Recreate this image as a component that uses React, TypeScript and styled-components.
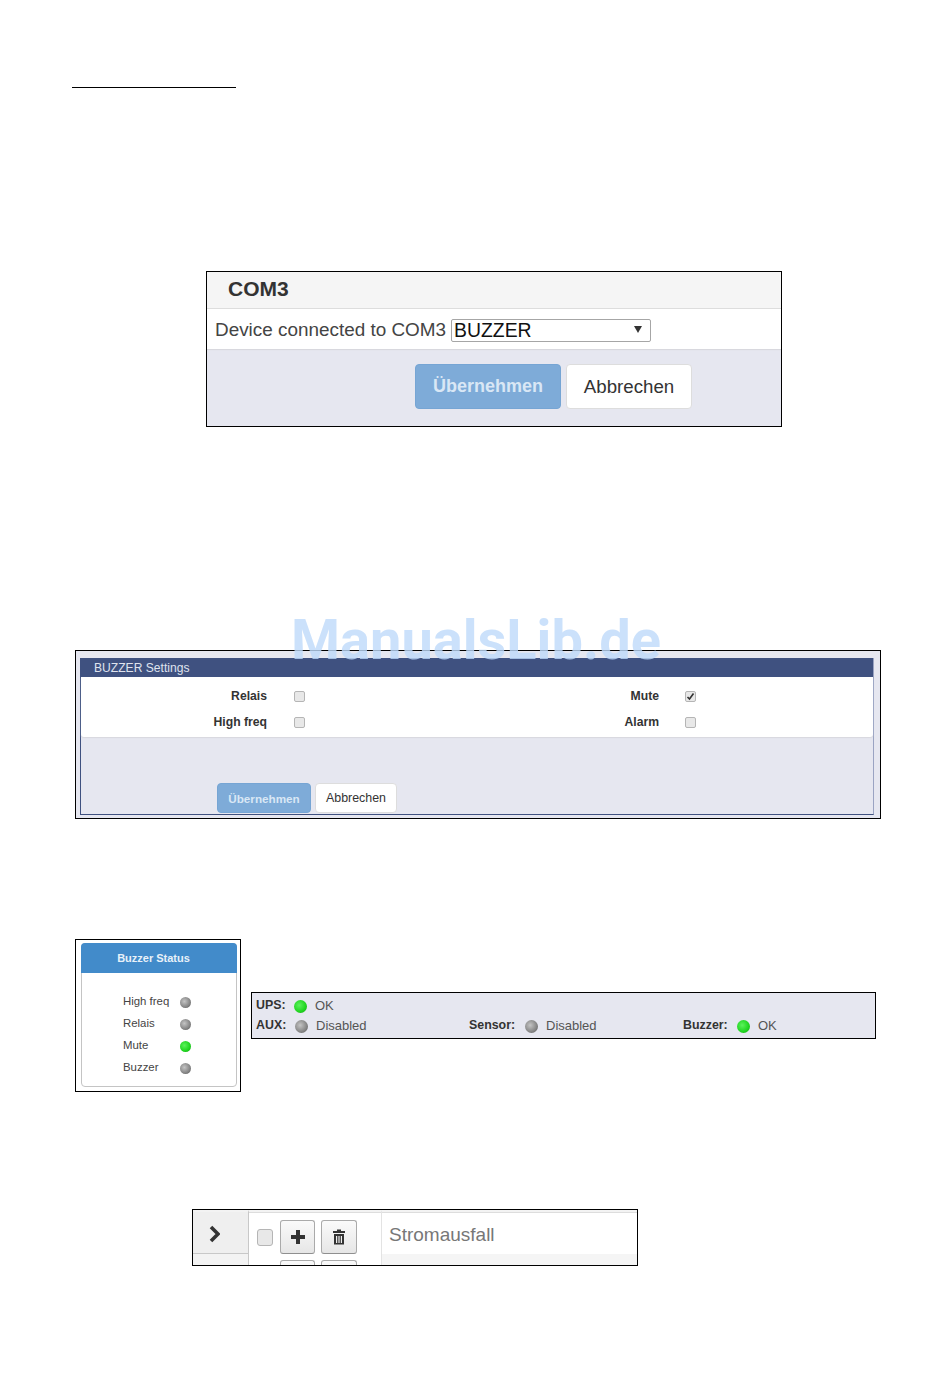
import React from "react";
import styled, { createGlobalStyle } from "styled-components";

const Global = createGlobalStyle`
  html, body { margin: 0; padding: 0; background: #fff; }
  body { font-family: "Liberation Sans", Arial, sans-serif; color: #333; }
`;

const Page = styled.div`
  position: relative;
  width: 950px;
  height: 1387px;
  overflow: hidden;
  padding-top: 87px;
  box-sizing: border-box;
`;

const Rule = styled.div`
  width: 164px;
  height: 1px;
  margin-left: 72px;
  background: #000;
`;

const Shot = styled.div<{ $w: number; $h: number }>`
  box-sizing: border-box;
  width: ${(p) => p.$w}px;
  height: ${(p) => p.$h}px;
  border: 1px solid #000;
  overflow: hidden;
  flex: none;
`;

const ComShot = styled(Shot)`
  margin: 183px 0 0 206px;
  display: flex;
  flex-direction: column;
  background: #e6e7f0;
`;

const ComHeader = styled.div`
  height: 36px;
  flex: none;
  padding-left: 21px;
  background: #f5f5f5;
  border-bottom: 1px solid #ddd;
  font-size: 21px;
  font-weight: 700;
  line-height: 34px;
  color: #333;
`;

const ComBody = styled.div`
  box-sizing: border-box;
  height: 40px;
  flex: none;
  padding: 2px 0 0 8px;
  display: flex;
  align-items: center;
  gap: 5px;
  background: #fff;
  box-shadow: 0 1px 1px #d8d8de;
  font-size: 18.9px;
  color: #444;
`;

const Select = styled.div`
  box-sizing: border-box;
  width: 200px;
  height: 23px;
  margin-top: 1px;
  padding-left: 2px;
  display: flex;
  align-items: center;
  justify-content: space-between;
  border: 1px solid #a6a6a6;
  border-radius: 2px;
  font-size: 19.4px;
  color: #111;
`;

const Arrow = styled.span`
  width: 0;
  height: 0;
  margin: 0 8px 3px 0;
  border-left: 4px solid transparent;
  border-right: 4px solid transparent;
  border-top: 7px solid #333;
`;

const ComActions = styled.div`
  display: flex;
  gap: 5px;
  margin: 15px 0 0 208px;
`;

const Button = styled.div<{ $primary?: boolean; $w: number; $h: number; $size: number }>`
  box-sizing: border-box;
  width: ${(p) => p.$w}px;
  height: ${(p) => p.$h}px;
  display: flex;
  align-items: center;
  justify-content: center;
  border-radius: 4px;
  font-size: ${(p) => p.$size}px;
  background: ${(p) => (p.$primary ? "#7eabd8" : "#fff")};
  color: ${(p) => (p.$primary ? "#d9e7f5" : "#333")};
  border: 1px solid ${(p) => (p.$primary ? "#76a5d4" : "#ddd")};
  font-weight: ${(p) => (p.$primary ? 700 : 400)};
`;

const BuzzerShot = styled(Shot)`
  margin: 223px 0 0 75px;
  padding: 7px 6px 3px 4px;
  background: #e6e7f0;
`;

const BuzzerFrame = styled.div`
  height: 156px;
  border-right: 1px solid #9aa3c2;
  border-left: 1px solid #3f5180;
  border-bottom: 1px solid #3f5180;
  display: flex;
  flex-direction: column;
`;

const BuzzerTitle = styled.div`
  height: 19px;
  flex: none;
  margin-left: -1px;
  margin-right: 0;
  padding-left: 14px;
  background: #3f5180;
  color: #dfe3ee;
  font-size: 12.1px;
  line-height: 20px;
`;

const BuzzerForm = styled.div`
  height: 60px;
  flex: none;
  display: grid;
  grid-template-columns: 186px 38px 354px 37px;
  grid-auto-rows: 26px;
  align-items: center;
  padding-top: 6px;
  box-sizing: border-box;
  background: #fff;
  border-radius: 0 0 3px 3px;
  box-shadow: 0 1px 1px #d8d8de;
`;

const FieldLabel = styled.span`
  text-align: right;
  font-size: 12.2px;
  font-weight: 700;
  color: #333;
`;

const Check = styled.span`
  box-sizing: border-box;
  justify-self: end;
  width: 11px;
  height: 11px;
  display: flex;
  align-items: center;
  justify-content: center;
  border: 1px solid #b5b5b5;
  border-radius: 2px;
  background: #e8e8e8;
`;

const BuzzerActions = styled.div`
  display: flex;
  gap: 4px;
  margin: 46px 0 0 136px;
`;

const StatusRow = styled.div`
  display: flex;
  align-items: flex-start;
  margin: 120px 0 0 75px;
`;

const StatusShot = styled(Shot)`
  padding: 3px 3px 4px 5px;
`;

const StatusPanel = styled.div`
  box-sizing: border-box;
  height: 144px;
  border: 1px solid #c4c4c4;
  border-radius: 4px;
`;

const StatusTitle = styled.div`
  height: 30px;
  margin: -1px -1px 0;
  padding-right: 11px;
  border-radius: 4px 4px 0 0;
  background: #428bca;
  color: #e8f1f9;
  font-size: 11px;
  font-weight: 700;
  line-height: 30px;
  text-align: center;
`;

const StatusList = styled.div`
  padding: 18px 0 0 41px;
  display: grid;
  grid-template-columns: 57px auto;
  grid-auto-rows: 22px;
  align-items: center;
  justify-content: start;
  font-size: 11.4px;
  color: #444;
`;

const StatusName = styled.span`
  margin-bottom: 2px;
`;

const Dot = styled.span<{ $on?: boolean; $size: number }>`
  display: block;
  width: ${(p) => p.$size}px;
  height: ${(p) => p.$size}px;
  border-radius: 50%;
  flex: none;
  background: ${(p) =>
    p.$on
      ? "radial-gradient(circle at 40% 40%, #5cf25c, #1fd41f 60%, #0f9a0f)"
      : "radial-gradient(circle at 40% 40%, #c4c4c4, #858585 60%, #4e4e4e)"};
`;

const UpsShot = styled(Shot)`
  margin: 53px 0 0 10px;
  background: #e6e7f0;
  padding: 3px 0 0 4px;
  font-size: 13px;
  color: #555;
`;

const UpsLine = styled.div`
  display: grid;
  grid-template-columns: 213px 214px auto;
  height: 20px;
  align-items: center;
`;

const UpsItem = styled.div`
  display: flex;
  align-items: center;
`;

const UpsKey = styled.b<{ $w: number }>`
  width: ${(p) => p.$w}px;
  margin-bottom: 2px;
  font-size: 12.4px;
  color: #333;
`;

const UpsValue = styled.span`
  margin: 0 0 2px 8px;
`;

const TableShot = styled(Shot)`
  margin: 117px 0 0 192px;
  position: relative;
  display: grid;
  grid-template-columns: 56px 133px 1fr;
  grid-template-rows: 44px 11px;
`;

const ArrowCell = styled.div`
  box-sizing: border-box;
  background: #efefef;
  border-right: 1px solid #c8c8c8;
  border-top: 2px solid #f3f3f3;
  border-bottom: 1px solid #c8c8c8;
  padding: 13px 0 0 16px;
`;

const ActionCell = styled.div`
  grid-row: span 2;
  border-right: 1px solid #e3e3e3;
  border-top: 2px solid #f3f3f3;
  box-shadow: inset 0 1px 0 #ddd;
  padding: 8px 0 0 8px;
  background: #fff;
`;

const ActionRow = styled.div`
  display: flex;
  align-items: center;
  gap: 6px;
`;

const NextRow = styled(ActionRow)`
  margin: 6px 0 0 23px;
`;

const BigCheck = styled.span`
  box-sizing: border-box;
  width: 16px;
  height: 17px;
  margin-right: 1px;
  border: 1px solid #b5b5b5;
  border-radius: 3px;
  background: #e8e8e8;
`;

const IconButton = styled.div<{ $w: number }>`
  box-sizing: border-box;
  width: ${(p) => p.$w}px;
  height: 34px;
  display: flex;
  align-items: center;
  justify-content: center;
  border: 1px solid #aaa;
  border-bottom-color: #8f8f8f;
  border-radius: 3px;
  background: linear-gradient(#fafafa, #e6e6e6);
`;

const NameCell = styled.div`
  padding-left: 7px;
  border-top: 2px solid #f3f3f3;
  box-shadow: inset 0 1px 0 #ddd;
  font-size: 19px;
  line-height: 45px;
  color: #777;
  background: #fff;
`;

const Filler = styled.div`
  background: #f5f5f5;
`;

const FillerLeft = styled.div`
  background: #f3f3f3;
  border-right: 1px solid #c8c8c8;
`;

const Watermark = styled.div`
  position: absolute;
  left: 291px;
  top: 610px;
  font-family: Roboto, "Liberation Sans", sans-serif;
  font-size: 56px;
  line-height: 60px;
  font-weight: 700;
  white-space: nowrap;
  color: rgba(190, 217, 250, 0.8);
`;

export default function App() {
  return (
    <>
      <Global />
      <Page>
        <Rule />

        <ComShot $w={576} $h={156}>
          <ComHeader>COM3</ComHeader>
          <ComBody>
            Device connected to COM3
            <Select>
              BUZZER
              <Arrow />
            </Select>
          </ComBody>
          <ComActions>
            <Button $primary $w={146} $h={45} $size={18}>Übernehmen</Button>
            <Button $w={126} $h={45} $size={18.7}>Abbrechen</Button>
          </ComActions>
        </ComShot>

        <BuzzerShot $w={806} $h={169}>
          <BuzzerFrame>
            <BuzzerTitle>BUZZER Settings</BuzzerTitle>
            <BuzzerForm>
              <FieldLabel>Relais</FieldLabel>
              <Check />
              <FieldLabel>Mute</FieldLabel>
              <Check>
                <svg width="9" height="9" viewBox="0 0 9 9">
                  <path d="M1.5 5 L3.5 7 L7.5 1.5" fill="none" stroke="#333" strokeWidth="1.6" />
                </svg>
              </Check>
              <FieldLabel>High freq</FieldLabel>
              <Check />
              <FieldLabel>Alarm</FieldLabel>
              <Check />
            </BuzzerForm>
            <BuzzerActions>
              <Button $primary $w={94} $h={30} $size={11.7}>Übernehmen</Button>
              <Button $w={82} $h={30} $size={12.4}>Abbrechen</Button>
            </BuzzerActions>
          </BuzzerFrame>
        </BuzzerShot>

        <StatusRow>
          <StatusShot $w={166} $h={153}>
            <StatusPanel>
              <StatusTitle>Buzzer Status</StatusTitle>
              <StatusList>
                <StatusName>High freq</StatusName>
                <Dot $size={11} />
                <StatusName>Relais</StatusName>
                <Dot $size={11} />
                <StatusName>Mute</StatusName>
                <Dot $size={11} $on />
                <StatusName>Buzzer</StatusName>
                <Dot $size={11} />
              </StatusList>
            </StatusPanel>
          </StatusShot>

          <UpsShot $w={625} $h={47}>
            <UpsLine>
              <UpsItem>
                <UpsKey $w={38}>UPS:</UpsKey>
                <Dot $size={13} $on />
                <UpsValue>OK</UpsValue>
              </UpsItem>
            </UpsLine>
            <UpsLine>
              <UpsItem>
                <UpsKey $w={39}>AUX:</UpsKey>
                <Dot $size={13} />
                <UpsValue>Disabled</UpsValue>
              </UpsItem>
              <UpsItem>
                <UpsKey $w={56}>Sensor:</UpsKey>
                <Dot $size={13} />
                <UpsValue>Disabled</UpsValue>
              </UpsItem>
              <UpsItem>
                <UpsKey $w={54}>Buzzer:</UpsKey>
                <Dot $size={13} $on />
                <UpsValue>OK</UpsValue>
              </UpsItem>
            </UpsLine>
          </UpsShot>
        </StatusRow>

        <TableShot $w={446} $h={57}>
          <ArrowCell>
            <svg width="11" height="18" viewBox="0 0 11 18">
              <path d="M2 2 L9 9 L2 16" fill="none" stroke="#333" strokeWidth="3.6" />
            </svg>
          </ArrowCell>
          <ActionCell>
            <ActionRow>
              <BigCheck />
              <IconButton $w={35}>
                <svg width="16" height="16" viewBox="0 0 16 16">
                  <path d="M6 1h4v5h5v4h-5v5H6v-5H1V6h5z" fill="#333" />
                </svg>
              </IconButton>
              <IconButton $w={36}>
                <svg width="14" height="16" viewBox="0 0 14 16">
                  <path
                    d="M5 0.5h4v1.5h4v2H1V2h4zM2 5h10v10.5H2zM4 7v7h1.2V7zM6.4 7v7h1.2V7zM8.8 7v7H10V7z"
                    fill="#333"
                    fillRule="evenodd"
                  />
                </svg>
              </IconButton>
            </ActionRow>
            <NextRow>
              <IconButton $w={35} />
              <IconButton $w={36} />
            </NextRow>
          </ActionCell>
          <NameCell>Stromausfall</NameCell>
          <FillerLeft />
          <Filler />
        </TableShot>

        <Watermark>ManualsLib.de</Watermark>
      </Page>
    </>
  );
}
